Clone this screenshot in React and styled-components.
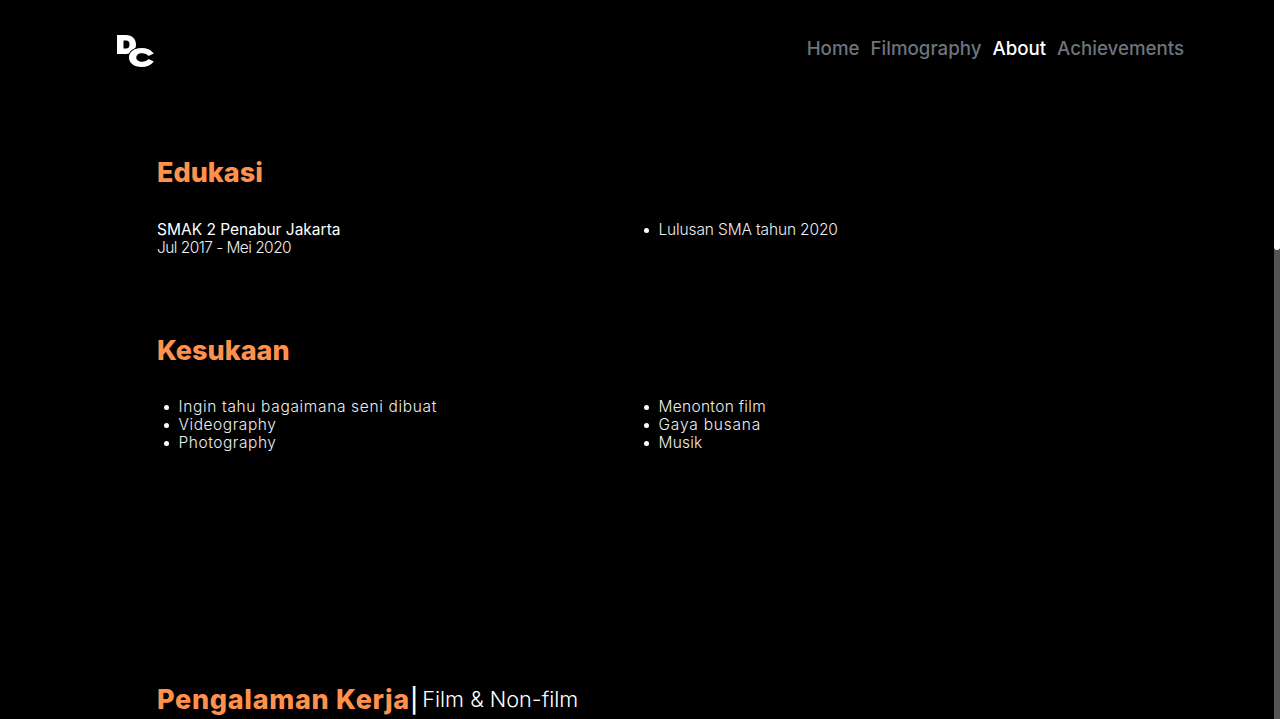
import styled, { createGlobalStyle } from 'styled-components';

const Global = createGlobalStyle`
  html, body { margin: 0; padding: 0; background: #000; }
  body { font-family: "Inter", "Liberation Sans", sans-serif; color: #fff; }
`;

const Page = styled.div`
  display: flex;
  height: 100vh;
  overflow: hidden;
  background: #000;
`;

const Content = styled.div`
  flex: 1;
`;

const ScrollTrack = styled.div`
  width: 6px;
  background: #555;
`;

const ScrollThumb = styled.div`
  height: 250px;
  background: #fff;
  border-radius: 0 0 3px 3px;
`;

const Header = styled.header`
  display: flex;
  align-items: flex-start;
  justify-content: space-between;
  padding: 35px 90px 0 117px;
`;

const Nav = styled.nav`
  display: flex;
  gap: 11px;
  padding-top: 2px;
`;

const NavLink = styled.a`
  font-size: 18.7px;
  line-height: 24px;
  font-weight: 500;
  color: ${p => (p.$active ? '#fff' : '#6c757d')};
`;

const Main = styled.main`
  padding: 87px 0 0 157px;
`;

const Section = styled.section`
  margin-bottom: ${p => p.$gap}px;
`;

const Title = styled.h2`
  margin: 0 0 ${p => p.$after || 0}px;
  font-size: 27px;
  line-height: 36px;
  font-weight: 800;
  color: #ff914d;
`;

const Columns = styled.div`
  display: grid;
  grid-template-columns: 480px 480px;
  font-size: 15.5px;
  line-height: 18px;
  font-weight: 300;
  color: #eee;
`;

const Line = styled.div`
  letter-spacing: ${p => p.$track}px;
  font-weight: ${p => (p.$strong ? 400 : 300)};
  color: ${p => (p.$strong ? '#fff' : 'inherit')};
`;

const Bullets = styled.ul`
  margin: 0;
  padding: 0 0 0 21.5px;
  list-style: none;
`;

const Item = styled.li`
  position: relative;
  letter-spacing: ${p => p.$track}px;
  &::before {
    content: "";
    position: absolute;
    left: -15px;
    top: 7px;
    width: 5px;
    height: 5px;
    border-radius: 50%;
    background: #fff;
  }
`;

const WorkTitle = styled.div`
  display: flex;
  align-items: center;
  padding-top: 2px;
`;

const WorkName = styled(Title)`
  letter-spacing: 0.7px;
`;

const WorkPipe = styled.span`
  font-size: 24px;
  font-weight: 500;
`;

const WorkSub = styled.span`
  font-size: 21.7px;
  font-weight: 300;
  margin-left: 4px;
  padding-bottom: 2px;
`;

const likesLeft = [
  { text: 'Ingin tahu bagaimana seni dibuat', track: 0.65 },
  { text: 'Videography', track: 0.55 },
  { text: 'Photography', track: 0.55 },
];

const likesRight = [
  { text: 'Menonton film', track: 0.3 },
  { text: 'Gaya busana', track: 0.8 },
  { text: 'Musik', track: 0.2 },
];

function Logo() {
  return (
    <svg width="38" height="33" viewBox="0 0 38 33">
      <path
        fill="#fff"
        fillRule="evenodd"
        d="M0 0H9C15 0 19 4 19 9.500C19 15 15 19 9 19H0ZM6.500 5.500V13.500H9C11.500 13.500 12.500 12 12.500 9.500C12.500 7 11.500 5.500 9 5.500Z"
      />
      <path
        fill="#fff"
        stroke="#000"
        strokeWidth="2"
        paintOrder="stroke"
        d="M24.500 13C29.500 13 34 14.800 36.800 18.500L31.500 21C30.200 19.300 27.800 18.300 25 18.300C21.800 18.300 19.300 19.800 19.300 22.500C19.300 25.200 21.800 26.700 25 26.700C27.800 26.700 30.200 25.700 31.500 24L36.800 26.500C34 30.200 29.500 32 24.500 32C17 32 12 28 12 22.500C12 17 17 13 24.500 13Z"
      />
    </svg>
  );
}

export default function App() {
  return (
    <Page>
      <Global />
      <Content>
        <Header>
          <Logo />
          <Nav>
            <NavLink>Home</NavLink>
            <NavLink>Filmography</NavLink>
            <NavLink $active>About</NavLink>
            <NavLink>Achievements</NavLink>
          </Nav>
        </Header>
        <Main>
          <Section $gap={76}>
            <Title $after={30}>Edukasi</Title>
            <Columns>
              <div>
                <Line $strong $track={0}>SMAK 2 Penabur Jakarta</Line>
                <Line $track={-0.55}>Jul 2017 - Mei 2020</Line>
              </div>
              <Bullets>
                <Item $track={-0.14}>Lulusan SMA tahun 2020</Item>
              </Bullets>
            </Columns>
          </Section>
          <Section $gap={228}>
            <Title $after={29}>Kesukaan</Title>
            <Columns>
              <Bullets>
                {likesLeft.map(l => <Item key={l.text} $track={l.track}>{l.text}</Item>)}
              </Bullets>
              <Bullets>
                {likesRight.map(l => <Item key={l.text} $track={l.track}>{l.text}</Item>)}
              </Bullets>
            </Columns>
          </Section>
          <WorkTitle>
            <WorkName>Pengalaman Kerja</WorkName>
            <WorkPipe>|</WorkPipe>
            <WorkSub>Film &amp; Non-film</WorkSub>
          </WorkTitle>
        </Main>
      </Content>
      <ScrollTrack>
        <ScrollThumb />
      </ScrollTrack>
    </Page>
  );
}
